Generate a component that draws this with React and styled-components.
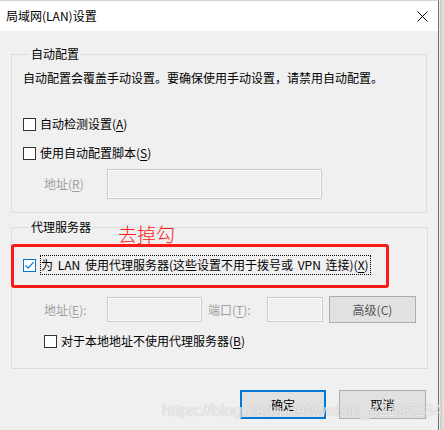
import React from 'react';
import styled, { createGlobalStyle } from 'styled-components';

const GlobalStyle = createGlobalStyle`
  html, body {
    margin: 0;
    padding: 0;
    background: linear-gradient(to right, #f0f0f0 0, #f0f0f0 440px, #c8c8c8 440px, #e8e8e8 444px);
  }
  body {
    font-family: "Noto Sans CJK SC", "Noto Sans", sans-serif;
    font-size: 12px;
    color: #000;
  }
`;

const Window = styled.div`
  position: relative;
  width: 439px;
  height: 430px;
  background: #f0f0f0;
  border-right: 1px solid #6e6e6e;
  border-top: 1px solid #d4d4d4;
  box-sizing: border-box;
  display: flex;
  flex-direction: column;
`;

const TitleBar = styled.div`
  height: 30px;
  background: #fff;
  display: flex;
  align-items: center;
  justify-content: space-between;
  padding: 0 10px 0 6px;
  line-height: 16px;
`;

const Content = styled.div`
  padding: 15px 11px 0 11px;
  display: flex;
  flex-direction: column;
`;

const Group = styled.fieldset`
  position: relative;
  margin: 0;
  padding: 0 11px ${p => p.$bottom}px 11px;
  border: 1px solid #dcdcdc;
  display: flex;
  flex-direction: column;
  & + & {
    margin-top: 6px;
  }
`;

const Legend = styled.legend`
  margin-left: 6px;
  padding: 0 2px;
  line-height: 16px;
`;

const Text = styled.div`
  line-height: 16px;
  margin-top: ${p => p.$top || 0}px;
`;

const Row = styled.div`
  display: flex;
  align-items: center;
  height: ${p => p.$h || 20}px;
  margin-top: ${p => p.$top || 0}px;
  padding-left: ${p => p.$indent || 0}px;
`;

const Box = styled.span`
  width: 13px;
  height: 13px;
  box-sizing: border-box;
  border: 1px solid ${p => (p.$checked ? '#0078d7' : '#333')};
  background: #fff;
  display: inline-flex;
  align-items: center;
  justify-content: center;
  margin-right: 4px;
  flex: none;
`;

const Label = styled.span`
  line-height: 16px;
  white-space: nowrap;
  color: ${p => (p.$disabled ? '#a0a0a0' : '#000')};
  width: ${p => (p.$w ? p.$w + 'px' : 'auto')};
  flex: none;
`;

const Focus = styled.span`
  border: 1px dotted #000;
  padding: 1px 1px 1px 0;
  line-height: 16px;
  white-space: nowrap;
  word-spacing: 2px;
`;

const Input = styled.span`
  display: inline-block;
  width: ${p => p.$w}px;
  height: ${p => p.$h}px;
  box-sizing: border-box;
  border: 1px solid #cccccc;
  box-shadow: inset 0 0 0 1px #fafafa;
  background: #f0f0f0;
  flex: none;
`;

const Button = styled.div`
  width: ${p => p.$w}px;
  height: ${p => p.$h}px;
  box-sizing: border-box;
  background: #e1e1e1;
  border: ${p => (p.$default ? '2px solid #0078d7' : '1px solid #adadad')};
  color: ${p => (p.$disabled ? '#555' : '#000')};
  display: flex;
  align-items: center;
  justify-content: center;
  flex: none;
`;

const Buttons = styled.div`
  display: flex;
  justify-content: flex-end;
  gap: 13px;
  margin-top: 21px;
  padding-right: 1px;
`;

const Note = styled.div`
  position: absolute;
  left: 106px;
  top: -13px;
  color: #ff1a1a;
  font-size: 19px;
  line-height: 24px;
  font-weight: 300;
`;

const Highlight = styled.div`
  position: absolute;
  left: -1px;
  top: 9px;
  width: 378px;
  height: 44px;
  box-sizing: border-box;
  border: 3px solid #ff1a1a;
  border-radius: 3px;
  pointer-events: none;
`;

const Watermark = styled.div`
  position: absolute;
  left: 162px;
  top: 399px;
  font-family: "Liberation Sans", Arial, sans-serif;
  font-size: 16.5px;
  line-height: 20px;
  color: rgba(255, 255, 255, 0.75);
  text-shadow: 0 0 1px rgba(110, 110, 110, 0.55);
  white-space: nowrap;
  pointer-events: none;
`;

const U = styled.u`
  text-underline-offset: 2px;
`;

const Close = () => (
  <svg width="11" height="11" viewBox="0 0 11 11">
    <path d="M0.5 0.5 L10.5 10.5 M10.5 0.5 L0.5 10.5" stroke="#000" strokeWidth="1" />
  </svg>
);

const Check = () => (
  <svg width="11" height="11" viewBox="0 0 11 11">
    <path d="M1.5 5.5 L4.2 8.2 L9.5 2.2" fill="none" stroke="#0078d7" strokeWidth="1.2" />
  </svg>
);

export default function App() {
  return (
    <>
      <GlobalStyle />
      <Window>
        <TitleBar>
          <span>局域网(LAN)设置</span>
          <Close />
        </TitleBar>
        <Content>
          <Group $bottom={13}>
            <Legend>自动配置</Legend>
            <Text $top={8}>自动配置会覆盖手动设置。要确保使用手动设置，请禁用自动配置。</Text>
            <Row $top={28}>
              <Box />
              <Label>自动检测设置(<U>A</U>)</Label>
            </Row>
            <Row $top={9}>
              <Box />
              <Label>使用自动配置脚本(<U>S</U>)</Label>
            </Row>
            <Row $top={6} $h={30} $indent={21}>
              <Label $disabled $w={63}>地址(<U>R</U>)</Label>
              <Input $w={215} $h={30} />
            </Row>
          </Group>
          <Group $bottom={17}>
            <Legend>代理服务器</Legend>
            <Note>去掉勾</Note>
            <Highlight />
            <Row $top={20}>
              <Box $checked>
                <Check />
              </Box>
              <Focus>为 LAN 使用代理服务器(这些设置不用于拨号或 VPN 连接)(<U>X</U>)</Focus>
            </Row>
            <Row $top={21} $h={27} $indent={21}>
              <Label $disabled $w={63}>地址(<U>E</U>):</Label>
              <Input $w={95} $h={25} />
              <Label $disabled $w={59} style={{ marginLeft: 6 }}>端口(<U>T</U>):</Label>
              <Input $w={56} $h={25} />
              <Button $w={87} $h={27} $disabled style={{ marginLeft: 6 }}>高级(C)</Button>
            </Row>
            <Row $top={8} $indent={21}>
              <Box />
              <Label>对于本地地址不使用代理服务器(<U>B</U>)</Label>
            </Row>
          </Group>
          <Buttons>
            <Button $w={86} $h={29} $default>确定</Button>
            <Button $w={87} $h={29}>取消</Button>
          </Buttons>
        </Content>
        <Watermark>https://blog.csdn.net/weixin_42195284</Watermark>
      </Window>
    </>
  );
}
